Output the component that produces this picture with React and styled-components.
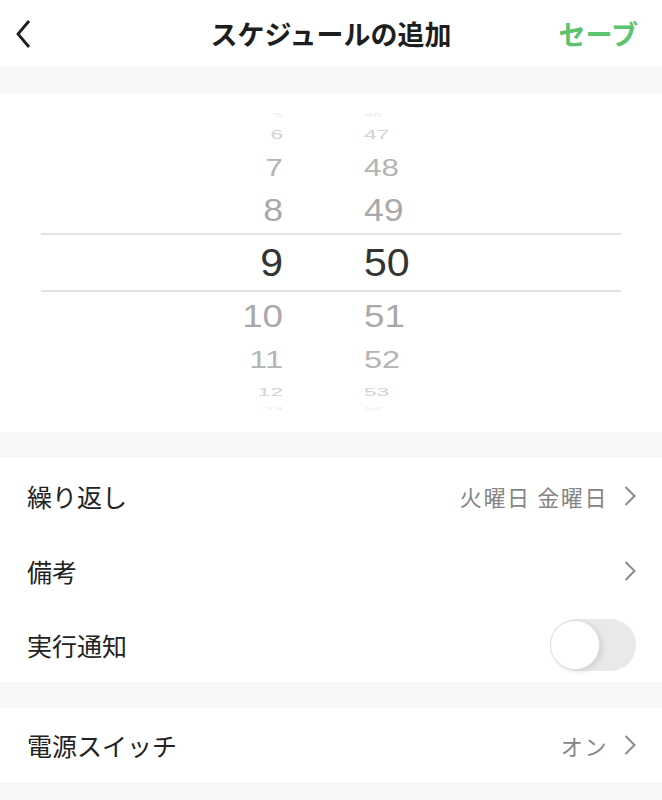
import React, { Fragment } from "react";
import styled, { createGlobalStyle } from "styled-components";

const GlobalStyle = createGlobalStyle`
  html, body {
    margin: 0;
    padding: 0;
    background: #f7f7f7;
  }
  body {
    font-family: "Liberation Sans", "Noto Sans CJK JP", sans-serif;
    color: #222;
  }
`;

const Page = styled.div`
  width: 662px;
  min-height: 800px;
  background: #f7f7f7;
`;

const Header = styled.header`
  height: 67px;
  background: #fff;
  display: flex;
  align-items: center;
  justify-content: space-between;
  padding: 0 24px 0 14px;
  box-sizing: border-box;
  position: relative;
`;

const BackButton = styled.button`
  border: 0;
  background: none;
  padding: 0;
  width: 24px;
  height: 34px;
  display: flex;
  align-items: center;
  cursor: pointer;
`;

const Title = styled.h1`
  position: absolute;
  left: 0;
  right: 0;
  text-align: center;
  margin: 0;
  font-family: "Noto Sans CJK JP", sans-serif;
  font-size: 27px;
  font-weight: 700;
  color: #1e1e1e;
  pointer-events: none;
`;

const SaveButton = styled.button`
  border: 0;
  background: none;
  padding: 0;
  font-family: "Noto Sans CJK JP", sans-serif;
  font-size: 27px;
  font-weight: 700;
  color: #5cc36e;
  position: relative;
  z-index: 1;
  cursor: pointer;
`;

const Gap = styled.div`
  height: 26px;
`;

const PickerSection = styled.section`
  background: #fff;
  height: 339px;
  padding: 15px 41px 0;
  box-sizing: border-box;
  overflow: hidden;
`;

const Band = styled.div`
  border-top: ${(p) => (p.$selected ? "2px solid #e2e2e2" : "0")};
  border-bottom: ${(p) => (p.$selected ? "2px solid #e2e2e2" : "0")};
`;

const PickerRow = styled.div`
  display: flex;
  height: ${(p) => p.$h}px;
  align-items: center;
  font-family: "Liberation Sans", sans-serif;
  font-size: ${(p) => p.$size}px;
  color: ${(p) => p.$color};
  line-height: 1;
`;

const HourCell = styled.div`
  width: 242px;
  text-align: right;
  transform: scale(1.08, ${(p) => p.$sy});
  transform-origin: right center;
`;

const MinuteCell = styled.div`
  margin-left: 81px;
  transform: scale(1.08, ${(p) => p.$sy});
  transform-origin: left center;
`;

const List = styled.section`
  background: #fff;
`;

const Row = styled.div`
  height: ${(p) => p.$h || 75}px;
  display: flex;
  align-items: center;
  justify-content: space-between;
  padding: 0 26px 0 27px;
  box-sizing: border-box;
`;

const Label = styled.span`
  font-family: "Noto Sans CJK JP", sans-serif;
  font-size: 25px;
  color: #222;
`;

const Trailing = styled.div`
  display: flex;
  align-items: center;
  gap: 16px;
`;

const Value = styled.span`
  font-family: "Noto Sans CJK JP", sans-serif;
  font-size: 22px;
  color: #858585;
  letter-spacing: 1.6px;
`;

const Switch = styled.div`
  width: 86px;
  height: 52px;
  border-radius: 26px;
  background: #e9e9e9;
  position: relative;
`;

const Knob = styled.div`
  position: absolute;
  left: 1px;
  top: 2px;
  width: 48px;
  height: 48px;
  border-radius: 50%;
  background: #fff;
  box-shadow: 0 0 0 1px #e2e2e2, 3px 2px 6px rgba(0, 0, 0, 0.12);
`;

const Chevron = () => (
  <svg width="12" height="22" viewBox="0 0 12 22">
    <path d="M1.5 2 L10.5 11 L1.5 20" fill="none" stroke="#8a8a8a" strokeWidth="2" />
  </svg>
);

const BackIcon = () => (
  <svg width="20" height="30" viewBox="0 0 20 30">
    <path d="M15 2 L4 15 L15 28" fill="none" stroke="#1e1e1e" strokeWidth="2.8" />
  </svg>
);

const above = [
  { h: "5", m: "46", rh: 14, size: 15, color: "#ececec", sy: 0.3 },
  { h: "6", m: "47", rh: 25, size: 21, color: "#d2d2d2", sy: 0.6 },
  { h: "7", m: "48", rh: 41, size: 29, color: "#b4b4b4", sy: 0.85 },
  { h: "8", m: "49", rh: 45, size: 33, color: "#a9a9a9", sy: 0.93 },
];

const below = [
  { h: "10", m: "51", rh: 48, size: 34, color: "#a9a9a9", sy: 0.93 },
  { h: "11", m: "52", rh: 40, size: 30, color: "#b4b4b4", sy: 0.82 },
  { h: "12", m: "53", rh: 23, size: 21, color: "#d2d2d2", sy: 0.55 },
  { h: "13", m: "54", rh: 10, size: 15, color: "#ececec", sy: 0.25 },
];

const renderRow = (r) => (
  <PickerRow key={r.h} $h={r.rh} $size={r.size} $color={r.color}>
    <HourCell $sy={r.sy}>{r.h}</HourCell>
    <MinuteCell $sy={r.sy}>{r.m}</MinuteCell>
  </PickerRow>
);

const App = () => {
  return (
    <Fragment>
      <GlobalStyle />
      <Page>
        <Header>
          <BackButton>
            <BackIcon />
          </BackButton>
          <Title>スケジュールの追加</Title>
          <SaveButton>セーブ</SaveButton>
        </Header>
        <Gap />
        <PickerSection>
          <Band>{above.map(renderRow)}</Band>
          <Band $selected>
            <PickerRow $h={55} $size={38} $color="#333">
              <HourCell $sy={1}>9</HourCell>
              <MinuteCell $sy={1}>50</MinuteCell>
            </PickerRow>
          </Band>
          <Band>{below.map(renderRow)}</Band>
        </PickerSection>
        <Gap />
        <List>
          <Row>
            <Label>繰り返し</Label>
            <Trailing>
              <Value>火曜日 金曜日</Value>
              <Chevron />
            </Trailing>
          </Row>
          <Row>
            <Label>備考</Label>
            <Trailing>
              <Chevron />
            </Trailing>
          </Row>
          <Row $h={74}>
            <Label>実行通知</Label>
            <Switch>
              <Knob />
            </Switch>
          </Row>
        </List>
        <Gap />
        <List>
          <Row $h={74}>
            <Label>電源スイッチ</Label>
            <Trailing>
              <Value>オン</Value>
              <Chevron />
            </Trailing>
          </Row>
        </List>
      </Page>
    </Fragment>
  );
};

export default App;
